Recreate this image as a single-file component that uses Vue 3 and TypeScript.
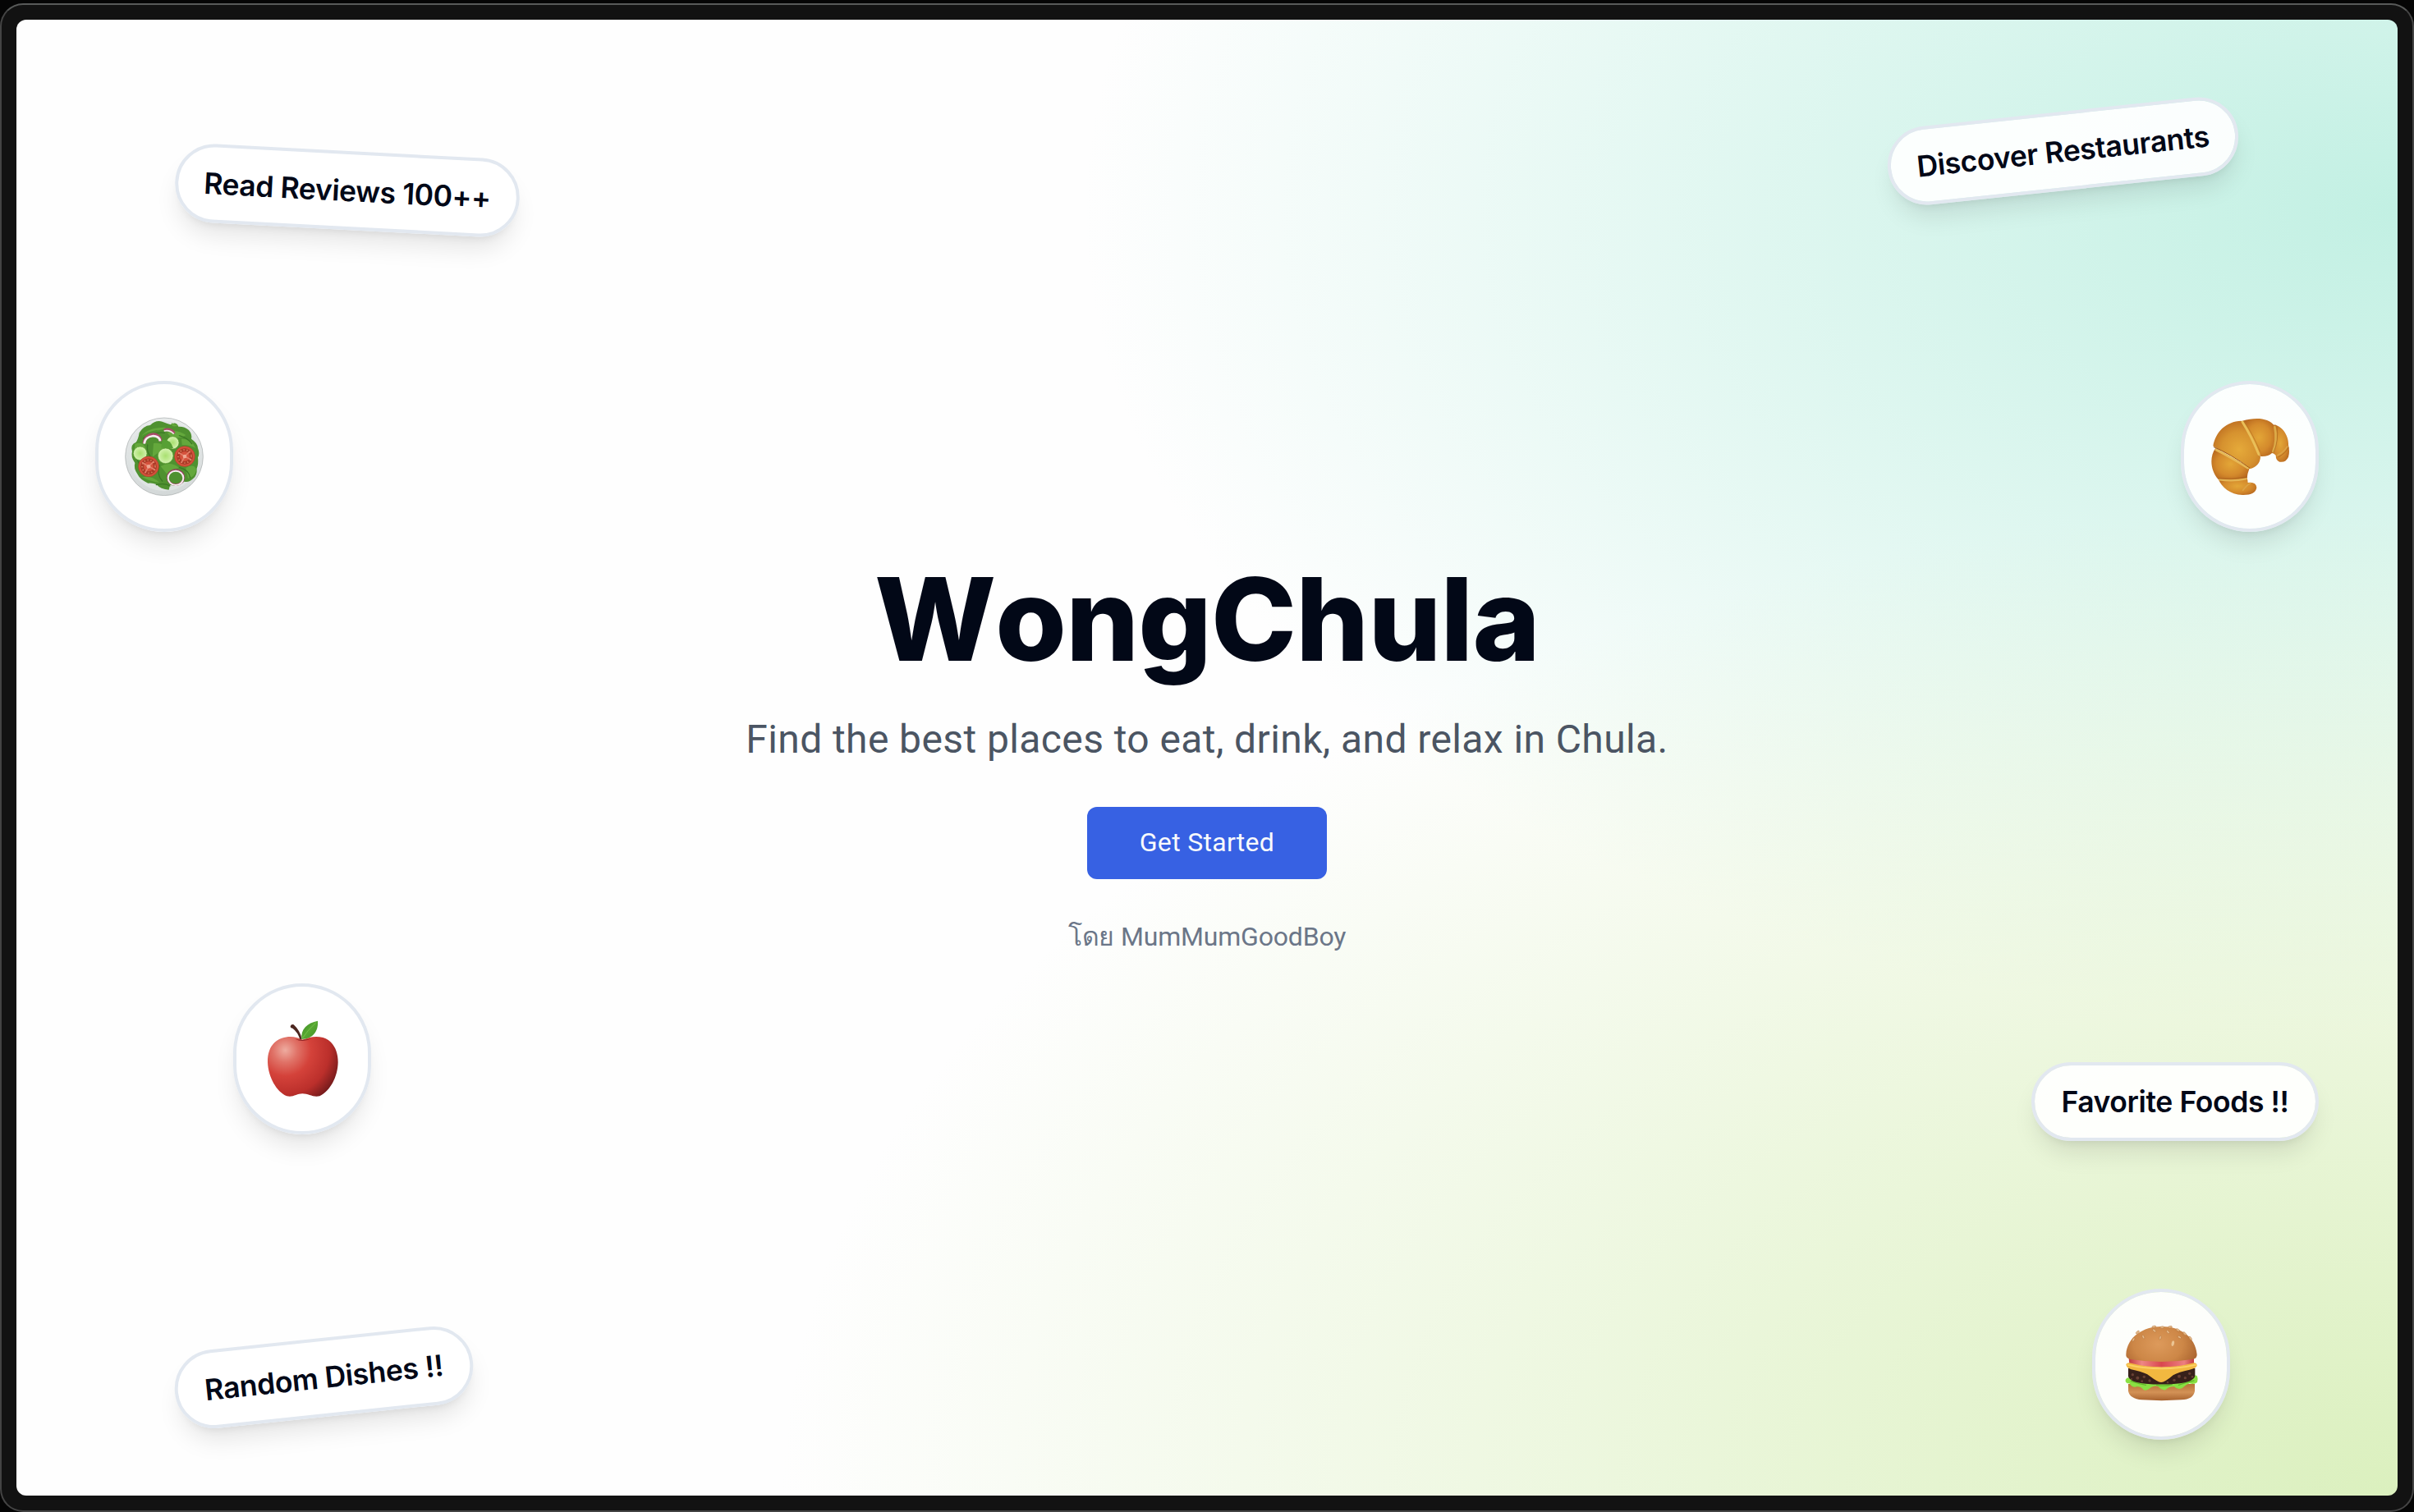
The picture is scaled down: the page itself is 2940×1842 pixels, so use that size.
<script setup lang="ts">
interface Tag {
  label: string
  cls: string
}

const tags: Tag[] = [
  { label: 'Read Reviews 100++', cls: 'tag-reviews' },
  { label: 'Discover Restaurants', cls: 'tag-discover' },
  { label: 'Favorite Foods !!', cls: 'tag-favorite' },
  { label: 'Random Dishes !!', cls: 'tag-random' },
]

const seeds: [number, number, number][] = [
  [235, 246, 28], [271, 236, -25], [311, 213, -50], [333, 239, 15], [361, 218, -45],
  [403, 237, -60], [397, 211, -60], [422, 224, -45], [443, 241, -35],
  [340, 201, 85], [310, 199, 80], [369, 200, 80], [250, 219, 50],
]
</script>

<template>
  <div class="screen">
    <div class="frame">
      <main class="page">
        <section class="hero">
          <h1 class="title">WongChula</h1>
          <p class="subtitle">Find the best places to eat, drink, and relax in Chula.</p>
          <button class="cta" type="button">Get Started</button>
          <p class="credit"><span class="thai">โดย</span> <span>MumMumGoodBoy</span></p>
        </section>

        <div v-for="tag in tags" :key="tag.label" class="tag" :class="tag.cls">{{ tag.label }}</div>

        <div class="bubble bubble-salad">
          <svg viewBox="185 204 288 288" class="food">
            <defs>
              <linearGradient id="plate" x1="0" y1="0" x2="0" y2="1">
                <stop offset="0" stop-color="#e9ecec" />
                <stop offset="1" stop-color="#d3d8d8" />
              </linearGradient>
              <radialGradient id="cuke"><stop offset="0" stop-color="#a9e070" /><stop offset=".65" stop-color="#c4ec98" /><stop offset="1" stop-color="#d6f3b4" /></radialGradient>
            </defs>
            <circle cx="329" cy="349" r="142" fill="url(#plate)" stroke="#a6abab" stroke-width="2" />
            <circle cx="329" cy="347" r="128" fill="#dfe4e3" />
            <path d="M238 262 Q252 236 278 234 Q298 214 322 221 Q340 228 352 232 Q372 218 381 239 Q404 238 419 252 Q432 268 428 284 Q452 300 452 318 Q460 338 452 352 Q455 376 448 392 Q450 418 434 430 Q420 444 402 440 Q382 456 350 453 L346 470 Q316 468 300 450 Q286 444 270 446 Q240 432 232 414 Q216 392 222 372 Q206 350 212 330 Q204 304 226 296 Q234 286 238 262Z" fill="#4f9130" />
            <g fill="#64a83c">
              <path d="M246 274 Q270 240 336 242 Q318 256 300 252 Q268 258 246 274Z" />
              <path d="M340 262 Q374 246 408 270 Q388 286 352 276Z" />
              <path d="M222 302 Q254 292 262 322 Q238 320 222 346Z" />
              <path d="M290 300 Q320 296 344 318 Q316 326 286 350Z" />
              <path d="M392 284 Q430 282 444 318 Q420 304 394 306Z" />
              <path d="M316 384 Q352 364 384 390 Q350 394 340 414Z" />
              <path d="M408 390 Q440 372 446 398 Q440 424 416 428Z" />
              <path d="M248 424 Q284 416 312 444 Q278 440 248 424Z" />
              <path d="M380 236 Q352 244 356 226Z" />
            </g>
            <g fill="none" stroke="#3a7824" stroke-width="4" stroke-linecap="round">
              <path d="M252 282 Q284 258 330 262" /><path d="M268 306 Q264 330 278 348" />
              <path d="M384 272 Q414 280 430 302" /><path d="M312 380 Q300 414 322 438" />
              <path d="M358 320 Q348 300 326 292" /><path d="M384 388 Q420 398 424 426" />
              <path d="M236 372 Q226 352 230 336" /><path d="M300 452 Q330 444 350 456" />
            </g>
            <path d="M256 300 C258 260 314 258 315 292" fill="none" stroke="#a84a68" stroke-width="12" />
            <path d="M256 302 C260 266 312 266 314 292" fill="none" stroke="#f5eef0" stroke-width="8" />
            <path d="M328 252 Q352 244 366 264" fill="none" stroke="#a84a68" stroke-width="10" />
            <path d="M328 255 Q350 250 364 266" fill="none" stroke="#f3e4e8" stroke-width="5" />
            <circle cx="360" cy="298" r="23" fill="url(#cuke)" stroke="#579a2c" stroke-width="2" />
            <path d="M322 288 Q352 284 362 318 Q342 322 318 316Z" fill="#57a034" />
            <circle cx="241" cy="337" r="25" fill="url(#cuke)" stroke="#579a2c" stroke-width="2" />
            <circle cx="334" cy="346" r="28" fill="url(#cuke)" stroke="#579a2c" stroke-width="2" />
            <g v-for="(t, i) in [[272, 385], [404, 348]]" :key="i" :transform="`translate(${t[0]} ${t[1]})`">
              <circle r="37" fill="#d5523c" stroke="#b53c29" stroke-width="2" />
              <circle r="24" fill="none" stroke="#ab3b28" stroke-width="12" />
              <circle r="24" fill="none" stroke="#e8a070" stroke-width="5" stroke-dasharray="3 9" />
              <path d="M-22 -14 L0 0 L18 -18 M0 0 L-12 22 M0 0 L23 12" stroke="#e2806a" stroke-width="5" stroke-linecap="round" fill="none" />
              <circle r="7" fill="#efa893" />
            </g>
            <ellipse cx="371" cy="425" rx="29" ry="27" fill="none" stroke="#97435f" stroke-width="8" />
            <ellipse cx="371" cy="427" rx="28" ry="26" fill="none" stroke="#f5eef0" stroke-width="6" />
          </svg>
        </div>

        <div class="bubble bubble-croissant">
          <svg viewBox="185 204 288 288" class="food">
            <defs>
              <radialGradient id="cr1" cx=".55" cy=".6" r=".62"><stop offset="0" stop-color="#e5aa3a" /><stop offset=".6" stop-color="#d6922f" /><stop offset="1" stop-color="#bf7022" /></radialGradient>
              <radialGradient id="cr2" cx=".5" cy=".5" r=".6"><stop offset="0" stop-color="#e3a637" /><stop offset=".6" stop-color="#d48a2c" /><stop offset="1" stop-color="#b6661e" /></radialGradient>
            </defs>
            <path d="M214 430 C240 426 290 428 318 424 Q322 436 322 444 Q352 440 354 462 Q350 490 302 489 C258 488 226 462 214 430Z" fill="url(#cr2)" />
            <path d="M204 318 C240 340 300 368 327 394 Q320 412 319 427 Q262 436 214 432 C186 402 180 350 204 318Z" fill="url(#cr2)" />
            <path d="M418 232 C456 240 472 284 470 306 Q476 330 470 350 Q460 372 438 368 Q424 362 424 344 Q416 334 408 336Z" fill="url(#cr2)" />
            <path d="M302 218 C350 204 396 206 420 236 Q428 290 410 336 Q396 350 368 348 Q350 300 302 218Z" fill="url(#cr2)" />
            <path d="M195 310 C204 258 242 220 298 218 C330 258 356 310 368 350 Q366 384 328 394 C300 360 246 344 195 310Z" fill="url(#cr1)" />
            <g fill="none" stroke-linecap="round">
              <path d="M302 222 Q334 272 362 340" stroke="#e9bf58" stroke-width="9" />
              <path d="M309 220 Q340 266 367 330" stroke="#bd7a24" stroke-width="2.5" />
              <path d="M206 324 Q258 350 322 390" stroke="#e6b957" stroke-width="9" />
              <path d="M198 314 Q260 340 328 390" stroke="#9f5817" stroke-width="3" />
              <path d="M420 240 Q430 290 414 330" stroke="#dcaa48" stroke-width="8" />
              <path d="M428 240 Q436 290 416 334" stroke="#a7661d" stroke-width="2" />
              <path d="M218 433 Q270 440 316 430" stroke="#e4b554" stroke-width="7" />
              <path d="M216 429 Q270 432 318 424" stroke="#a25b19" stroke-width="2" />
              <path d="M304 472 Q318 452 332 446" stroke="#dca345" stroke-width="5" />
              <path d="M430 344 Q452 334 466 312" stroke="#dca345" stroke-width="5" />
              <path d="M434 350 Q458 338 470 316" stroke="#9f5817" stroke-width="2" />
            </g>
          </svg>
        </div>

        <div class="bubble bubble-apple">
          <svg viewBox="180 186 288 288" class="food">
            <defs>
              <radialGradient id="ap" gradientUnits="userSpaceOnUse" cx="262" cy="298" r="225">
                <stop offset="0" stop-color="#eeaca0" /><stop offset=".2" stop-color="#e07267" /><stop offset=".42" stop-color="#d4423a" /><stop offset=".72" stop-color="#bb2f2b" /><stop offset="1" stop-color="#641618" />
              </radialGradient>
              <linearGradient id="leaf" x1="0" y1="0" x2="1" y2="1"><stop offset="0" stop-color="#3c8a24" /><stop offset=".5" stop-color="#58a833" /><stop offset="1" stop-color="#3f8f25" /></linearGradient>
            </defs>
            <path d="M325 260 C302 248 276 246 250 254 C214 266 197 300 198 342 C200 396 230 450 268 466 C290 472 304 457 325 457 C348 457 364 472 388 466 C426 448 454 396 455 342 C455 296 434 262 400 252 C374 245 350 250 325 260Z" fill="url(#ap)" />
            <path d="M298 257 Q325 272 358 256 Q326 264 298 257Z" fill="#8e2220" />
            <path d="M281 211 Q284 202 293 205 Q316 226 323 257 L316 259 Q308 232 289 218 Q281 218 281 211Z" fill="#4d2720" />
            <path d="M322 258 C318 222 342 198 381 191 C384 230 362 256 322 258Z" fill="url(#leaf)" />
            <path d="M326 253 Q346 222 374 198" stroke="#78c64c" stroke-width="2.5" fill="none" />
          </svg>
        </div>

        <div class="bubble bubble-burger">
          <svg viewBox="192 192 288 288" class="food">
            <defs>
              <radialGradient id="bun" gradientUnits="userSpaceOnUse" cx="325" cy="262" r="150" gradientTransform="translate(0 66) scale(1 .75)">
                <stop offset="0" stop-color="#dd9a5b" /><stop offset=".6" stop-color="#cd8747" /><stop offset="1" stop-color="#ad6731" />
              </radialGradient>
              <linearGradient id="bunb" x1="0" y1="0" x2="0" y2="1"><stop offset="0" stop-color="#b87238" /><stop offset=".5" stop-color="#d39256" /><stop offset="1" stop-color="#a9632f" /></linearGradient>
              <linearGradient id="tom" x1="0" y1="0" x2="1" y2="0"><stop offset="0" stop-color="#c23a40" /><stop offset=".2" stop-color="#ee8685" /><stop offset=".5" stop-color="#d9474f" /><stop offset=".85" stop-color="#ec7f80" /><stop offset="1" stop-color="#c23a40" /></linearGradient>
            </defs>
            <path d="M216 408 H459 V434 Q454 464 410 466 Q338 471 266 466 Q222 462 216 434Z" fill="url(#bunb)" />
            <path d="M206 392 Q214 380 226 388 L448 384 Q462 372 468 380 Q472 390 468 402 Q456 412 440 406 Q426 410 412 424 Q396 430 384 418 Q366 416 352 430 Q338 432 326 418 Q314 412 300 420 Q284 434 272 430 Q262 416 246 418 Q232 424 220 406 Q204 406 206 392Z" fill="#8ae043" />
            <path d="M226 398 Q256 408 280 412 M320 412 Q350 418 376 410 M400 412 Q430 400 456 396" stroke="#60b92a" stroke-width="4" fill="none" stroke-linecap="round" />
            <path d="M216 350 H460 V378 Q456 402 390 407 Q336 412 280 407 Q222 402 216 380Z" fill="#37201a" />
            <g fill="#684034">
              <circle cx="232" cy="374" r="5" /><circle cx="250" cy="386" r="6" /><circle cx="274" cy="382" r="5" /><circle cx="266" cy="398" r="4" /><circle cx="294" cy="396" r="5" />
              <circle cx="384" cy="394" r="5" /><circle cx="402" cy="380" r="6" /><circle cx="424" cy="386" r="5" /><circle cx="440" cy="370" r="5" /><circle cx="360" cy="402" r="4" /><circle cx="228" cy="390" r="3" /><circle cx="450" cy="382" r="4" />
            </g>
            <path d="M218 314 H456 V336 Q338 358 220 336Z" fill="url(#tom)" />
            <path d="M208 338 Q208 332 220 331 Q338 362 456 331 Q468 332 467 342 Q462 352 440 356 Q400 364 380 376 Q350 402 336 402 Q322 400 296 380 Q278 366 240 358 Q210 352 208 338Z" fill="#f2b840" />
            <path d="M212 338 Q338 366 464 338" stroke="#fbd267" stroke-width="5" fill="none" />
            <path d="M208 300 C212 236 270 198 338 198 C406 198 462 236 467 300 Q468 316 450 318 Q338 336 224 318 Q206 314 208 300Z" fill="url(#bun)" />
            <ellipse v-for="(s, i) in seeds" :key="i" rx="3.6" ry="7.5" :transform="`translate(${s[0]} ${s[1]}) rotate(${s[2]})`" fill="#e6ba88" stroke="#a96831" stroke-width="1.2" />
            <ellipse cx="379" cy="260" rx="5" ry="10" transform="rotate(12 379 260)" fill="#ebc493" />
          </svg>
        </div>
      </main>
    </div>
  </div>
</template>

<style>
body {
  margin: 0;
  background: #000;
}
</style>

<style scoped>
.screen {
  box-sizing: border-box;
  width: 2940px;
  height: 1842px;
  padding-top: 4px;
  background: #050505;
  overflow: hidden;
}
.frame {
  box-sizing: border-box;
  width: 2940px;
  height: 1838px;
  padding: 18px;
  border: 2px solid #444;
  border-top-color: #585a59;
  border-radius: 28px;
  background: #121212;
}
.page {
  position: relative;
  width: 2900px;
  height: 1798px;
  border-radius: 12px;
  overflow: hidden;
  background-color: #fefefe;
  background-image:
    radial-gradient(1970px 1210px at 100% 100%, #dbf0be, rgba(219, 240, 190, 0)),
    radial-gradient(1600px 1000px at 100% 13%, #c2f0e3, rgba(194, 240, 227, 0));
  color: #020817;
  font-family: Inter, "Liberation Sans", sans-serif;
}
.hero {
  display: flex;
  flex-direction: column;
  align-items: center;
  padding-top: 658px;
  font-family: Roboto, "Noto Sans", sans-serif;
}
.title {
  margin: 0;
  font: 800 140px/144px Inter, sans-serif;
  font-kerning: none;
  letter-spacing: -0.8px;
}
.subtitle {
  margin: 47px 0 0;
  font-size: 48px;
  line-height: 56px;
  letter-spacing: 0.4px;
  color: #4b5563;
  white-space: nowrap;
}
.cta {
  margin-top: 54px;
  padding: 0 0 3px;
  width: 292px;
  height: 88px;
  border: 0;
  border-radius: 12px;
  background: #3761e3;
  color: #f8fafc;
  font: 400 32px/48px Roboto, sans-serif;
  letter-spacing: 0.3px;
}
.credit {
  margin: 46px 0 0;
  font-size: 32px;
  line-height: 48px;
  letter-spacing: -0.2px;
  color: #6b7688;
  white-space: nowrap;
}
.tag,
.bubble {
  position: absolute;
  box-sizing: border-box;
  display: flex;
  align-items: center;
  justify-content: center;
  border: 4px solid #e2e8f0;
  border-radius: 9999px;
  background: rgba(255, 255, 255, 0.92);
  background-clip: padding-box;
  box-shadow: 0 20px 30px -6px rgba(0, 0, 0, 0.1), 0 8px 12px -8px rgba(0, 0, 0, 0.1);
}
.tag {
  height: 96px;
  padding-top: 1px;
  font-size: 35.5px;
  font-weight: 600;
  line-height: 56px;
  letter-spacing: -0.4px;
  white-space: nowrap;
}
.tag-reviews { left: 193px; top: 159.5px; width: 420px; transform: rotate(3deg); }
.tag-discover { left: 2278px; top: 112px; width: 429px; transform: rotate(-6deg); }
.tag-favorite { left: 2454px; top: 1270px; width: 350px; }
.tag-random { left: 192px; top: 1606px; width: 365px; transform: rotate(-6deg); }
.bubble {
  width: 168px;
  height: 184px;
}
.food {
  display: block;
  width: 96px;
  height: 96px;
}
.bubble-salad { left: 96px; top: 440px; }
.bubble-croissant { left: 2636px; top: 440px; }
.bubble-apple { left: 264px; top: 1174px; }
.bubble-burger { left: 2528px; top: 1546px; }
</style>
